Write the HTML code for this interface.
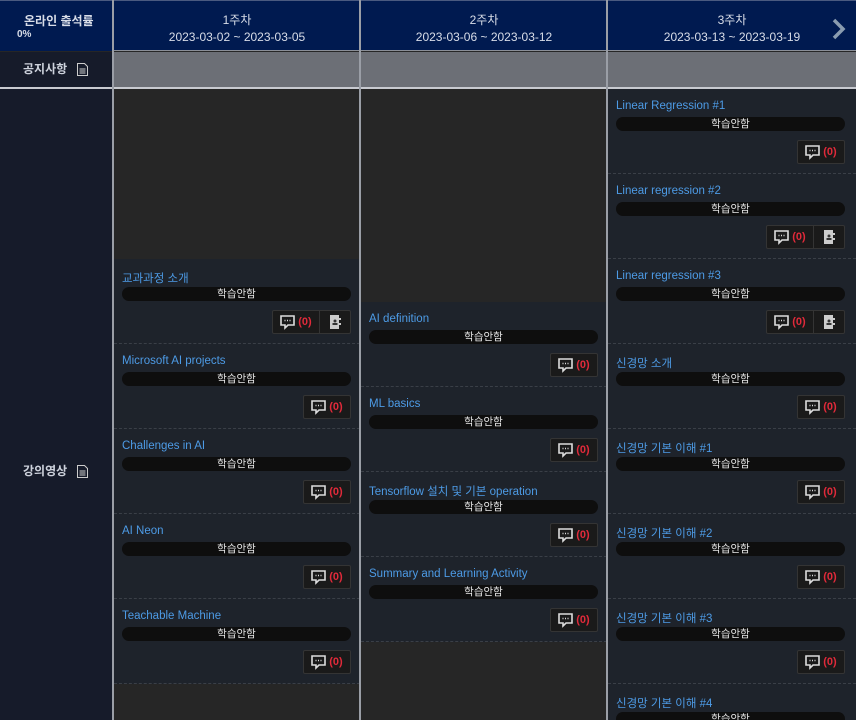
<!DOCTYPE html>
<html style="width:856px;height:720px;overflow:hidden"><head><meta charset="utf-8"><style>
*{margin:0;padding:0;box-sizing:border-box}
body{width:856px;height:720px;overflow:hidden;background:#262626;font-family:"Liberation Sans","Noto Sans CJK KR",sans-serif;position:relative}
.hd{position:absolute;top:0;height:51px;background:#001a50;color:#d8dde8;font-size:12px;text-align:center;border-top:1px solid #4a5a80}
.hd .w{margin-top:11px;line-height:17px}
.vl{position:absolute;top:0;height:720px;width:2px;background:#9a9ea6;z-index:5}
.hl{position:absolute;left:0;right:0;height:2px;background:#c8cad0;z-index:4}
.left{position:absolute;left:0;width:113px;background:#161b2a;color:#cdd2dc;font-size:12px;font-weight:bold}
.notice{position:absolute;top:52px;left:114px;right:0;height:35px;background:#6c6f76}
.col{position:absolute;top:89px;height:631px;overflow:hidden;width:246px}
.c{position:absolute;left:0;width:100%;height:85px;background:#1e232b;border-bottom:1px dashed #3a3f47}
.t{position:absolute;left:8px;top:11px;color:#4d9be6;font-size:11.5px}
.b{position:absolute;left:8px;right:9px;top:28px;height:14px;background:#0e0e0e;border-radius:7px;color:#e6e6e6;font-size:10.5px;text-align:center;line-height:14px}
.g{position:absolute;right:9px;top:51px;height:24px;display:flex;border:1px solid #343434;border-radius:2px;background:#1a1a1a}
.bt{width:46px;height:22px;display:flex;align-items:center;justify-content:center;gap:3px;color:#e02a3a;font-size:11px;font-weight:bold}
.nb{width:31px;height:22px;border-left:1px solid #343434;display:flex;align-items:center;justify-content:center}
</style></head><body>
<div class="hd" style="left:0;width:113px;text-align:left"><div style="margin-top:11px;padding-left:24px;font-weight:bold">온라인 출석률</div><div style="padding-left:17px;font-size:10px;font-weight:bold">0%</div></div>
<div class="hd" style="left:114px;width:246px"><div class="w">1주차<br>2023-03-02 ~ 2023-03-05</div></div>
<div class="hd" style="left:361px;width:246px"><div class="w">2주차<br>2023-03-06 ~ 2023-03-12</div></div>
<div class="hd" style="left:608px;width:248px"><div class="w">3주차<br>2023-03-13 ~ 2023-03-19</div>
<svg style="position:absolute;right:10px;top:17px" width="14" height="22" viewBox="0 0 14 22"><path d="M2 2 L11 11 L2 20" stroke="#8a9cb0" stroke-width="3.5" fill="none"/></svg></div>
<div class="left" style="top:52px;height:35px;line-height:35px;padding-left:23px">공지사항 <svg style="vertical-align:-3px;margin-left:6px" width="11" height="13" viewBox="0 0 11 13"><path d="M.5 .5h7l3 3v9h-10z" fill="none" stroke="#ccc"/><path d="M2.5 6h6M2.5 8h6M2.5 10h6" stroke="#ccc"/></svg></div>
<div class="left" style="top:89px;height:631px;padding-left:23px;padding-top:373px">강의영상 <svg style="vertical-align:-3px;margin-left:6px" width="11" height="13" viewBox="0 0 11 13"><path d="M.5 .5h7l3 3v9h-10z" fill="none" stroke="#ccc"/><path d="M2.5 6h6M2.5 8h6M2.5 10h6" stroke="#ccc"/></svg></div>
<div class="notice"></div>
<div class="vl" style="left:112px"></div><div class="vl" style="left:359px"></div><div class="vl" style="left:606px"></div>
<div class="hl" style="top:50px;left:113px;height:1px;background:#8a8e96"></div>
<div class="hl" style="top:87px"></div>

<div class="col" style="left:114px">
<div class="c" style="top:170px"><div class="t">교과과정 소개</div><div class="b">학습안함</div><div class="g"><div class="bt"><svg width="15" height="15" viewBox="0 0 15 15"><path d="M1 1h13v9H8l-3 3v-3H1z" fill="none" stroke="#ddd" stroke-width="1.6"/><path d="M4.5 5.5h1M7 5.5h1M9.5 5.5h1" stroke="#ddd" stroke-width="1.4"/></svg>(0)</div><div class="nb"><svg width="12" height="14" viewBox="0 0 12 14"><rect x="1" y="0" width="9" height="14" fill="#ccc"/><rect x="10" y="3" width="2" height="2" fill="#ccc"/><rect x="10" y="8" width="2" height="2" fill="#ccc"/><circle cx="6" cy="6" r="1.5" fill="#333"/><rect x="3.5" y="8" width="5" height="2" fill="#333"/></svg></div></div></div>
<div class="c" style="top:255px"><div class="t">Microsoft AI projects</div><div class="b">학습안함</div><div class="g"><div class="bt"><svg width="15" height="15" viewBox="0 0 15 15"><path d="M1 1h13v9H8l-3 3v-3H1z" fill="none" stroke="#ddd" stroke-width="1.6"/><path d="M4.5 5.5h1M7 5.5h1M9.5 5.5h1" stroke="#ddd" stroke-width="1.4"/></svg>(0)</div></div></div>
<div class="c" style="top:340px"><div class="t">Challenges in AI</div><div class="b">학습안함</div><div class="g"><div class="bt"><svg width="15" height="15" viewBox="0 0 15 15"><path d="M1 1h13v9H8l-3 3v-3H1z" fill="none" stroke="#ddd" stroke-width="1.6"/><path d="M4.5 5.5h1M7 5.5h1M9.5 5.5h1" stroke="#ddd" stroke-width="1.4"/></svg>(0)</div></div></div>
<div class="c" style="top:425px"><div class="t">AI Neon</div><div class="b">학습안함</div><div class="g"><div class="bt"><svg width="15" height="15" viewBox="0 0 15 15"><path d="M1 1h13v9H8l-3 3v-3H1z" fill="none" stroke="#ddd" stroke-width="1.6"/><path d="M4.5 5.5h1M7 5.5h1M9.5 5.5h1" stroke="#ddd" stroke-width="1.4"/></svg>(0)</div></div></div>
<div class="c" style="top:510px"><div class="t">Teachable Machine</div><div class="b">학습안함</div><div class="g"><div class="bt"><svg width="15" height="15" viewBox="0 0 15 15"><path d="M1 1h13v9H8l-3 3v-3H1z" fill="none" stroke="#ddd" stroke-width="1.6"/><path d="M4.5 5.5h1M7 5.5h1M9.5 5.5h1" stroke="#ddd" stroke-width="1.4"/></svg>(0)</div></div></div>
</div>

<div class="col" style="left:361px">
<div class="c" style="top:213px"><div class="t">AI definition</div><div class="b">학습안함</div><div class="g"><div class="bt"><svg width="15" height="15" viewBox="0 0 15 15"><path d="M1 1h13v9H8l-3 3v-3H1z" fill="none" stroke="#ddd" stroke-width="1.6"/><path d="M4.5 5.5h1M7 5.5h1M9.5 5.5h1" stroke="#ddd" stroke-width="1.4"/></svg>(0)</div></div></div>
<div class="c" style="top:298px"><div class="t">ML basics</div><div class="b">학습안함</div><div class="g"><div class="bt"><svg width="15" height="15" viewBox="0 0 15 15"><path d="M1 1h13v9H8l-3 3v-3H1z" fill="none" stroke="#ddd" stroke-width="1.6"/><path d="M4.5 5.5h1M7 5.5h1M9.5 5.5h1" stroke="#ddd" stroke-width="1.4"/></svg>(0)</div></div></div>
<div class="c" style="top:383px"><div class="t">Tensorflow 설치 및 기본 operation</div><div class="b">학습안함</div><div class="g"><div class="bt"><svg width="15" height="15" viewBox="0 0 15 15"><path d="M1 1h13v9H8l-3 3v-3H1z" fill="none" stroke="#ddd" stroke-width="1.6"/><path d="M4.5 5.5h1M7 5.5h1M9.5 5.5h1" stroke="#ddd" stroke-width="1.4"/></svg>(0)</div></div></div>
<div class="c" style="top:468px"><div class="t">Summary and Learning Activity</div><div class="b">학습안함</div><div class="g"><div class="bt"><svg width="15" height="15" viewBox="0 0 15 15"><path d="M1 1h13v9H8l-3 3v-3H1z" fill="none" stroke="#ddd" stroke-width="1.6"/><path d="M4.5 5.5h1M7 5.5h1M9.5 5.5h1" stroke="#ddd" stroke-width="1.4"/></svg>(0)</div></div></div>
</div>

<div class="col" style="left:608px;width:248px">
<div class="c" style="top:0"><div class="t">Linear Regression #1</div><div class="b" style="right:11px">학습안함</div><div class="g" style="right:11px"><div class="bt"><svg width="15" height="15" viewBox="0 0 15 15"><path d="M1 1h13v9H8l-3 3v-3H1z" fill="none" stroke="#ddd" stroke-width="1.6"/><path d="M4.5 5.5h1M7 5.5h1M9.5 5.5h1" stroke="#ddd" stroke-width="1.4"/></svg>(0)</div></div></div>
<div class="c" style="top:85px"><div class="t">Linear regression #2</div><div class="b" style="right:11px">학습안함</div><div class="g" style="right:11px"><div class="bt"><svg width="15" height="15" viewBox="0 0 15 15"><path d="M1 1h13v9H8l-3 3v-3H1z" fill="none" stroke="#ddd" stroke-width="1.6"/><path d="M4.5 5.5h1M7 5.5h1M9.5 5.5h1" stroke="#ddd" stroke-width="1.4"/></svg>(0)</div><div class="nb"><svg width="12" height="14" viewBox="0 0 12 14"><rect x="1" y="0" width="9" height="14" fill="#ccc"/><rect x="10" y="3" width="2" height="2" fill="#ccc"/><rect x="10" y="8" width="2" height="2" fill="#ccc"/><circle cx="6" cy="6" r="1.5" fill="#333"/><rect x="3.5" y="8" width="5" height="2" fill="#333"/></svg></div></div></div>
<div class="c" style="top:170px"><div class="t">Linear regression #3</div><div class="b" style="right:11px">학습안함</div><div class="g" style="right:11px"><div class="bt"><svg width="15" height="15" viewBox="0 0 15 15"><path d="M1 1h13v9H8l-3 3v-3H1z" fill="none" stroke="#ddd" stroke-width="1.6"/><path d="M4.5 5.5h1M7 5.5h1M9.5 5.5h1" stroke="#ddd" stroke-width="1.4"/></svg>(0)</div><div class="nb"><svg width="12" height="14" viewBox="0 0 12 14"><rect x="1" y="0" width="9" height="14" fill="#ccc"/><rect x="10" y="3" width="2" height="2" fill="#ccc"/><rect x="10" y="8" width="2" height="2" fill="#ccc"/><circle cx="6" cy="6" r="1.5" fill="#333"/><rect x="3.5" y="8" width="5" height="2" fill="#333"/></svg></div></div></div>
<div class="c" style="top:255px"><div class="t">신경망 소개</div><div class="b" style="right:11px">학습안함</div><div class="g" style="right:11px"><div class="bt"><svg width="15" height="15" viewBox="0 0 15 15"><path d="M1 1h13v9H8l-3 3v-3H1z" fill="none" stroke="#ddd" stroke-width="1.6"/><path d="M4.5 5.5h1M7 5.5h1M9.5 5.5h1" stroke="#ddd" stroke-width="1.4"/></svg>(0)</div></div></div>
<div class="c" style="top:340px"><div class="t">신경망 기본 이해 #1</div><div class="b" style="right:11px">학습안함</div><div class="g" style="right:11px"><div class="bt"><svg width="15" height="15" viewBox="0 0 15 15"><path d="M1 1h13v9H8l-3 3v-3H1z" fill="none" stroke="#ddd" stroke-width="1.6"/><path d="M4.5 5.5h1M7 5.5h1M9.5 5.5h1" stroke="#ddd" stroke-width="1.4"/></svg>(0)</div></div></div>
<div class="c" style="top:425px"><div class="t">신경망 기본 이해 #2</div><div class="b" style="right:11px">학습안함</div><div class="g" style="right:11px"><div class="bt"><svg width="15" height="15" viewBox="0 0 15 15"><path d="M1 1h13v9H8l-3 3v-3H1z" fill="none" stroke="#ddd" stroke-width="1.6"/><path d="M4.5 5.5h1M7 5.5h1M9.5 5.5h1" stroke="#ddd" stroke-width="1.4"/></svg>(0)</div></div></div>
<div class="c" style="top:510px"><div class="t">신경망 기본 이해 #3</div><div class="b" style="right:11px">학습안함</div><div class="g" style="right:11px"><div class="bt"><svg width="15" height="15" viewBox="0 0 15 15"><path d="M1 1h13v9H8l-3 3v-3H1z" fill="none" stroke="#ddd" stroke-width="1.6"/><path d="M4.5 5.5h1M7 5.5h1M9.5 5.5h1" stroke="#ddd" stroke-width="1.4"/></svg>(0)</div></div></div>
<div class="c" style="top:595px"><div class="t">신경망 기본 이해 #4</div><div class="b" style="right:11px">학습안함</div></div>
</div>
</body></html>
